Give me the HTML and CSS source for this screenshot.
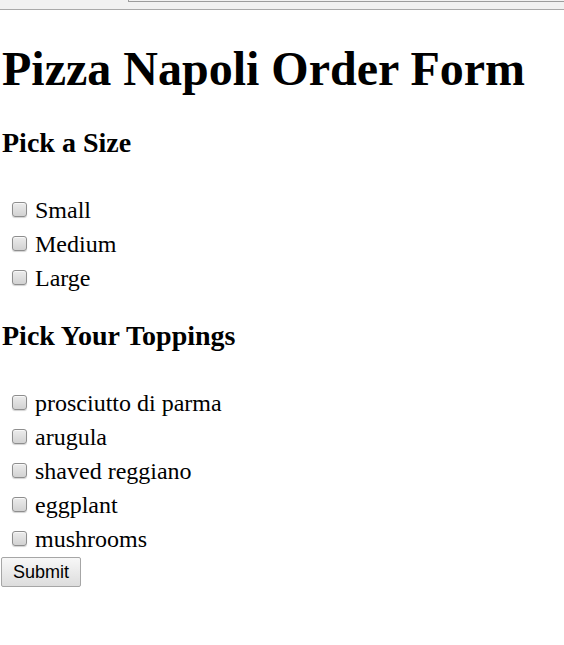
FILE: index.html
```html
<!DOCTYPE html>
<html>
<head>
<meta charset="utf-8">
<title>Pizza Napoli Order Form</title>
<link rel="stylesheet" href="styles.css">
</head>
<body>
<div class="chrome"><div class="chrome-box"></div></div>
<h1 class="title">Pizza Napoli Order Form</h1>
<form class="order">
  <h3 class="section first">Pick a Size</h3>
  <label class="row"><input type="checkbox" class="box"><span>Small</span></label>
  <label class="row"><input type="checkbox" class="box"><span>Medium</span></label>
  <label class="row"><input type="checkbox" class="box"><span>Large</span></label>
  <h3 class="section">Pick Your Toppings</h3>
  <label class="row"><input type="checkbox" class="box"><span>prosciutto di parma</span></label>
  <label class="row"><input type="checkbox" class="box"><span>arugula</span></label>
  <label class="row"><input type="checkbox" class="box"><span>shaved reggiano</span></label>
  <label class="row"><input type="checkbox" class="box"><span>eggplant</span></label>
  <label class="row"><input type="checkbox" class="box"><span>mushrooms</span></label>
  <button type="button" class="submit">Submit</button>
</form>
</body>
</html>
```
FILE: styles.css
```css
html, body {
  margin: 0;
  padding: 0;
  background: #ffffff;
  color: #000000;
  font-family: "Liberation Serif", "Times New Roman", serif;
}

.chrome {
  height: 9px;
  background: #f1f1f1;
  border-bottom: 1px solid #a9a9a9;
}

.chrome-box {
  margin-left: 128px;
  height: 1px;
  border-left: 1px solid #9c9c9c;
  border-bottom: 1px solid #9c9c9c;
}

.title {
  font-size: 48px;
  font-weight: bold;
  line-height: 56px;
  margin: 31px 0 30px 0;
  padding-left: 2px;
}

.order {
  display: flex;
  flex-direction: column;
  align-items: flex-start;
}

.section {
  font-size: 28px;
  font-weight: bold;
  line-height: 32px;
  margin: 25px 0 34px 0;
  padding-left: 2px;
}

.section.first {
  margin-top: 0;
}

.row {
  display: flex;
  align-items: center;
  height: 34px;
  font-size: 24px;
  line-height: 34px;
}

.box {
  -webkit-appearance: none;
  appearance: none;
  flex: 0 0 15px;
  box-sizing: border-box;
  width: 15px;
  height: 15px;
  margin: -1px 8px 0 12px;
  border: 1px solid #8e8e8e;
  border-radius: 3px;
  background: linear-gradient(#ececec, #d2d2d2);
  box-shadow: inset 0 1px 0 #f8f8f8, 0 1px 1px rgba(0,0,0,0.18);
}

.submit {
  box-sizing: border-box;
  height: 30px;
  margin: 1px 0 0 1px;
  padding: 0 11px;
  font-family: "Liberation Sans", Arial, sans-serif;
  font-size: 18px;
  color: #000000;
  background: linear-gradient(#f7f7f7, #dddddd);
  border: 1px solid #a6a6a6;
  border-radius: 2px;
}
```
